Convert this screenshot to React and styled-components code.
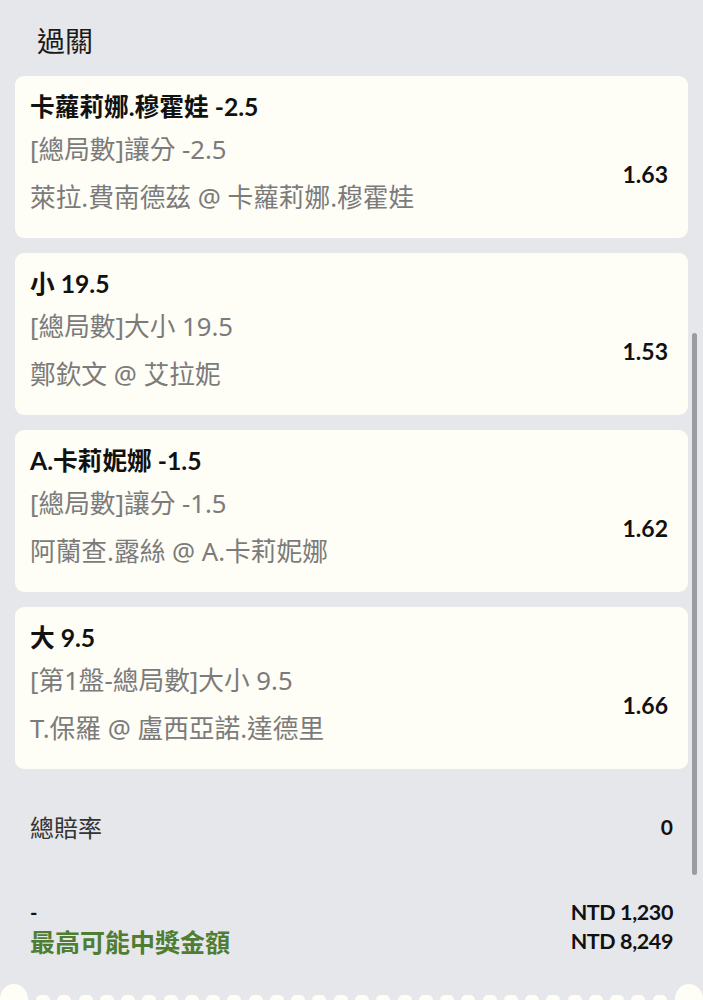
import React from "react";
import styled, { createGlobalStyle } from "styled-components";

const GlobalStyle = createGlobalStyle`
    html, body {
        margin: 0;
        padding: 0;
        background: #e6e7ea;
    }
    body {
        font-family: Lato, "Noto Sans CJK TC", sans-serif;
        color: #111;
    }
`;

const Page = styled.div`
    position: relative;
    width: 703px;
    height: 1000px;
    overflow: hidden;
    background: #e6e7ea;
    padding: 0 15px;
    box-sizing: border-box;
`;

const Heading = styled.h1`
    margin: 0;
    padding: 21px 0 0 22px;
    height: 76px;
    box-sizing: border-box;
    font-family: "Noto Sans CJK TC", sans-serif;
    font-weight: 400;
    font-size: 28px;
    line-height: 38px;
    color: #1a1a1a;
`;

const List = styled.div`
    display: flex;
    flex-direction: column;
    gap: 15px;
`;

const Card = styled.div`
    background: #fefdf6;
    border-radius: 9px;
    padding: 12px 20px 16px 15px;
    height: 162px;
    box-sizing: border-box;
`;

const Title = styled.div`
    font-family: Lato, "Noto Sans CJK TC", sans-serif;
    font-weight: 700;
    font-size: 24.7px;
    line-height: 38px;
    color: #111;
`;

const Body = styled.div`
    display: flex;
    align-items: center;
    justify-content: space-between;
`;

const Lines = styled.div`
    display: flex;
    flex-direction: column;
`;

const Line = styled.div`
    font-family: "Noto Sans", "Noto Sans CJK TC", sans-serif;
    font-size: 25.7px;
    line-height: 48px;
    color: #7b7b7b;
    white-space: nowrap;
`;

const Odds = styled.div`
    font-family: Lato, sans-serif;
    font-weight: 700;
    font-size: 23px;
    color: #111;
`;

const Summary = styled.div`
    display: flex;
    justify-content: space-between;
    align-items: center;
    padding: 0 15px;
    margin-top: 38px;
    height: 38px;
`;

const Label = styled.div`
    font-family: "Noto Sans CJK TC", sans-serif;
    font-size: 24px;
    color: #333;
`;

const Value = styled.div`
    font-family: Lato, sans-serif;
    font-weight: 700;
    font-size: 21px;
    color: #111;
`;

const Payout = styled.div`
    display: flex;
    justify-content: space-between;
    align-items: flex-end;
    padding: 0 15px;
    margin-top: 53px;
`;

const Stack = styled.div`
    display: flex;
    flex-direction: column;
    align-items: ${(p) => (p.$right ? "flex-end" : "flex-start")};
    line-height: 29px;
`;

const Dash = styled.div`
    font-family: Lato, sans-serif;
    font-weight: 700;
    font-size: 20px;
`;

const Highlight = styled.div`
    font-family: "Noto Sans CJK TC", sans-serif;
    font-weight: 700;
    font-size: 25px;
    color: #4e7d33;
`;

const Amount = styled.div`
    font-family: Lato, sans-serif;
    font-weight: 700;
    font-size: 21.5px;
    color: #111;
    letter-spacing: -0.4px;
`;

const Perforation = styled.div`
    display: flex;
    align-items: flex-start;
    justify-content: space-between;
    margin: 28px -15px 0;
    height: 30px;
`;

const Notch = styled.div`
    width: 28px;
    height: 30px;
    border-radius: 50%;
    background: #fefdf6;
    flex: none;
`;

const Dots = styled.div`
    flex: 1;
    display: flex;
    justify-content: space-between;
    padding: 11px 8px 0;
`;

const Dot = styled.div`
    width: 14px;
    height: 12px;
    border-radius: 5px;
    background: #fefdf6;
`;

const Scrollbar = styled.div`
    position: absolute;
    right: 6px;
    top: 333px;
    width: 5px;
    height: 542px;
    border-radius: 3px;
    background: #9c9c9e;
`;

const bets = [
    {
        title: "卡蘿莉娜.穆霍娃 -2.5",
        market: "[總局數]讓分 -2.5",
        match: "萊拉.費南德茲 @ 卡蘿莉娜.穆霍娃",
        odds: "1.63",
    },
    {
        title: "小 19.5",
        market: "[總局數]大小 19.5",
        match: "鄭欽文 @ 艾拉妮",
        odds: "1.53",
    },
    {
        title: "A.卡莉妮娜 -1.5",
        market: "[總局數]讓分 -1.5",
        match: "阿蘭查.露絲 @ A.卡莉妮娜",
        odds: "1.62",
    },
    {
        title: "大 9.5",
        market: "[第1盤-總局數]大小 9.5",
        match: "T.保羅 @ 盧西亞諾.達德里",
        odds: "1.66",
    },
];

const App = () => {
    return (
        <Page>
            <GlobalStyle />
            <Heading>過關</Heading>
            <List>
                {bets.map((bet, i) => (
                    <Card key={i}>
                        <Title>{bet.title}</Title>
                        <Body>
                            <Lines>
                                <Line>{bet.market}</Line>
                                <Line>{bet.match}</Line>
                            </Lines>
                            <Odds>{bet.odds}</Odds>
                        </Body>
                    </Card>
                ))}
            </List>
            <Summary>
                <Label>總賠率</Label>
                <Value>0</Value>
            </Summary>
            <Payout>
                <Stack>
                    <Dash>-</Dash>
                    <Highlight>最高可能中獎金額</Highlight>
                </Stack>
                <Stack $right>
                    <Amount>NTD 1,230</Amount>
                    <Amount>NTD 8,249</Amount>
                </Stack>
            </Payout>
            <Perforation>
                <Notch />
                <Dots>
                    {Array.from({ length: 30 }).map((_, i) => (
                        <Dot key={i} />
                    ))}
                </Dots>
                <Notch />
            </Perforation>
            <Scrollbar />
        </Page>
    );
};

export default App;
